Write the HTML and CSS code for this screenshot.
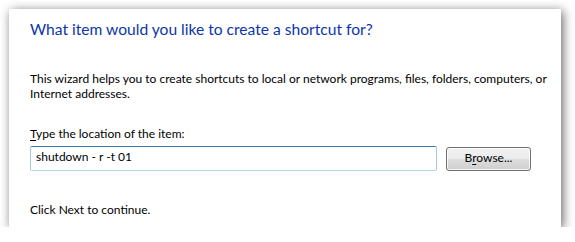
FILE: index.html
```html
<!DOCTYPE html>
<html>
<head>
<meta charset="utf-8">
<link rel="stylesheet" href="styles.css">
</head>
<body>
<div class="panel">
  <h1 class="title">What item would you like to create a shortcut for?</h1>
  <p class="intro">This wizard helps you to create shortcuts to local or network programs, files, folders, computers, or Internet addresses.</p>
  <label class="label" for="loc"><u>T</u>ype the location of the item:</label>
  <div class="row">
    <input id="loc" class="field" type="text" value="shutdown - r -t 01">
    <button class="btn" type="button">B<u>r</u>owse...</button>
  </div>
  <p class="hint">Click Next to continue.</p>
</div>
</body>
</html>
```
FILE: styles.css
```css
html, body {
  margin: 0;
  padding: 0;
  background: #ffffff;
}
body {
  font-family: Lato, "Liberation Sans", sans-serif;
  font-size: 12px;
  color: #000;
}
.panel {
  box-sizing: border-box;
  margin: 9px 0 0 9px;
  width: 552px;
  height: 218px;
  padding: 10px 0 0 21px;
  background: #fff;
  box-shadow: 2px 2px 10px rgba(0, 0, 0, 0.6);
}
.title {
  margin: 0;
  font-size: 15.6px;
  line-height: 20px;
  font-weight: normal;
  color: #0c36a8;
}
.intro {
  margin: 32px 0 0 0;
  width: 522px;
  line-height: 15px;
}
.label {
  display: block;
  margin-top: 25px;
  line-height: 15px;
}
.label u, .btn u {
  text-underline-offset: 2px;
}
.row {
  display: flex;
  align-items: flex-start;
  gap: 9px;
  margin-top: 5px;
}
.field {
  box-sizing: border-box;
  width: 407px;
  height: 25px;
  margin: 0;
  padding: 0 5px 4px 5px;
  border: 1px solid;
  border-color: #3d7bad #a4c9e3 #b7d9ed #a4c9e3;
  border-radius: 2px;
  font-family: Lato, "Liberation Sans", sans-serif;
  font-size: 12px;
  line-height: 15px;
  color: #000;
  background: #fff;
  outline: none;
}
.btn {
  box-sizing: border-box;
  width: 85px;
  height: 24px;
  margin: 1px 0 0 0;
  padding: 0 0 4px 0;
  border: 1px solid #707070;
  border-radius: 3px;
  background: linear-gradient(#f2f2f2 0%, #ebebeb 48%, #dddddd 52%, #cfcfcf 100%);
  box-shadow: inset 0 0 0 1px rgba(255, 255, 255, 0.8);
  font-family: Lato, "Liberation Sans", sans-serif;
  font-size: 12px;
  line-height: 15px;
  color: #000;
}
.hint {
  margin: 31px 0 0 0;
  line-height: 15px;
}
```
